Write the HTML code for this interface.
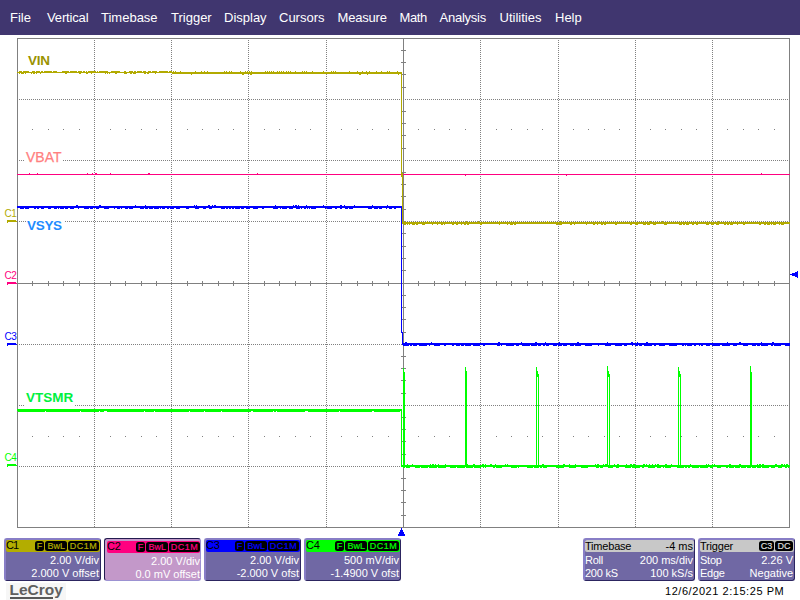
<!DOCTYPE html>
<html><head><meta charset="utf-8"><title>LeCroy</title>
<style>
html,body{margin:0;padding:0;}
body{width:800px;height:600px;background:#fff;position:relative;overflow:hidden;font-family:"Liberation Sans",sans-serif;}
#menu{position:absolute;left:0;top:0;width:800px;height:35px;background:#40366f;}
#menu span{position:absolute;top:10px;color:#fff;font-size:13px;line-height:16px;white-space:nowrap;}
svg{position:absolute;left:0;top:0;}
.lab{position:absolute;font-size:13px;line-height:13px;font-weight:bold;background:#fff;white-space:nowrap;padding:0 2px;}
.cm{position:absolute;font-size:10px;line-height:9px;left:4.5px;white-space:nowrap;letter-spacing:-0.5px}
.box{position:absolute;top:538px;width:97px;height:43px;box-sizing:border-box;background:#7068a4;border-style:solid;border-width:2px 1px 1px 2px;border-color:#887ec6 #2c2560 #2c2560 #887ec6;border-radius:3px;color:#fff;font-size:11px;}
.box.sel{background:#c398c9;border-width:1px;border-color:#241c50 #9c92d2 #9c92d2 #241c50;}
.box .in{position:absolute;left:0;top:0;right:0;bottom:0}
.box.sel .in{left:2px;top:2px;right:-1px;bottom:-1px}
.box .hd{position:absolute;left:0;top:0;right:0;height:12px;border-radius:2px;color:#000;}
.box.sel .hd{top:2px;left:2px;right:0}
.box .nm{position:absolute;left:1px;top:0;font-size:11px;line-height:12px;}
.box .cn{left:0;top:-1px;font-size:11px;letter-spacing:-1px}
.bd{position:absolute;top:1px;height:10px;background:#000;border-radius:2.5px;font-size:9px;line-height:10px;text-align:center;-webkit-text-stroke:0.2px}
.box .r1,.box .r2{position:absolute;right:1px;white-space:nowrap;line-height:12px;}
.box .r1{top:14px} .box .r2{top:27px}
.box.sel .r1{top:16px;right:0} .box.sel .r2{top:29px;right:0}
.box .l1,.box .l2{position:absolute;left:0;white-space:nowrap;line-height:12px;letter-spacing:-0.25px}
.box .l1{top:14px} .box .l2{top:27px}
.hdg{background:#c8c8c8}
#logo{position:absolute;left:6px;top:583px;width:60px;height:17px;background:#f6f6f6;}
#logo span{position:absolute;left:3.5px;top:-1px;font-size:15.5px;line-height:16px;font-weight:bold;color:#606060;}
#logo i{position:absolute;left:4px;top:14px;width:43px;height:2px;background:#585858}
#date{position:absolute;left:665px;top:585px;font-size:11px;line-height:12px;color:#000;white-space:nowrap;letter-spacing:0.55px}
</style></head><body>
<div id="menu">
<span style="left:10px">File</span><span style="left:47px;letter-spacing:-0.15px">Vertical</span><span style="left:101px">Timebase</span><span style="left:171px">Trigger</span><span style="left:224px">Display</span><span style="left:279px">Cursors</span><span style="left:337.5px;letter-spacing:-0.2px">Measure</span><span style="left:399.5px;letter-spacing:-0.4px">Math</span><span style="left:439.5px;letter-spacing:-0.25px">Analysis</span><span style="left:499.5px">Utilities</span><span style="left:555px">Help</span>
</div>
<svg width="800" height="600" viewBox="0 0 800 600" shape-rendering="crispEdges">
<rect x="17.5" y="38.5" width="772" height="489" fill="none" stroke="#808080" stroke-width="1"/>
<line x1="94.5" y1="40" x2="94.5" y2="527" stroke="#808080" stroke-width="1" stroke-dasharray="1 1"/>
<line x1="171.5" y1="40" x2="171.5" y2="527" stroke="#808080" stroke-width="1" stroke-dasharray="1 1"/>
<line x1="248.5" y1="40" x2="248.5" y2="527" stroke="#808080" stroke-width="1" stroke-dasharray="1 1"/>
<line x1="326.5" y1="40" x2="326.5" y2="527" stroke="#808080" stroke-width="1" stroke-dasharray="1 1"/>
<line x1="403.5" y1="38" x2="403.5" y2="527" stroke="#808080" stroke-width="1"/>
<line x1="480.5" y1="40" x2="480.5" y2="527" stroke="#808080" stroke-width="1" stroke-dasharray="1 1"/>
<line x1="558.5" y1="40" x2="558.5" y2="527" stroke="#808080" stroke-width="1" stroke-dasharray="1 1"/>
<line x1="635.5" y1="40" x2="635.5" y2="527" stroke="#808080" stroke-width="1" stroke-dasharray="1 1"/>
<line x1="712.5" y1="40" x2="712.5" y2="527" stroke="#808080" stroke-width="1" stroke-dasharray="1 1"/>
<line x1="19" y1="99.5" x2="789" y2="99.5" stroke="#808080" stroke-width="1" stroke-dasharray="1 1"/>
<line x1="19" y1="160.5" x2="789" y2="160.5" stroke="#808080" stroke-width="1" stroke-dasharray="1 1"/>
<line x1="19" y1="221.5" x2="789" y2="221.5" stroke="#808080" stroke-width="1" stroke-dasharray="1 1"/>
<line x1="17" y1="283.5" x2="789" y2="283.5" stroke="#808080" stroke-width="1"/>
<line x1="19" y1="344.5" x2="789" y2="344.5" stroke="#808080" stroke-width="1" stroke-dasharray="1 1"/>
<line x1="19" y1="405.5" x2="789" y2="405.5" stroke="#808080" stroke-width="1" stroke-dasharray="1 1"/>
<line x1="19" y1="466.5" x2="789" y2="466.5" stroke="#808080" stroke-width="1" stroke-dasharray="1 1"/>
<rect x="32" y="281" width="1" height="5" fill="#808080"/>
<rect x="48" y="281" width="1" height="5" fill="#808080"/>
<rect x="63" y="281" width="1" height="5" fill="#808080"/>
<rect x="79" y="281" width="1" height="5" fill="#808080"/>
<rect x="110" y="281" width="1" height="5" fill="#808080"/>
<rect x="125" y="281" width="1" height="5" fill="#808080"/>
<rect x="141" y="281" width="1" height="5" fill="#808080"/>
<rect x="156" y="281" width="1" height="5" fill="#808080"/>
<rect x="187" y="281" width="1" height="5" fill="#808080"/>
<rect x="202" y="281" width="1" height="5" fill="#808080"/>
<rect x="218" y="281" width="1" height="5" fill="#808080"/>
<rect x="233" y="281" width="1" height="5" fill="#808080"/>
<rect x="264" y="281" width="1" height="5" fill="#808080"/>
<rect x="279" y="281" width="1" height="5" fill="#808080"/>
<rect x="295" y="281" width="1" height="5" fill="#808080"/>
<rect x="310" y="281" width="1" height="5" fill="#808080"/>
<rect x="341" y="281" width="1" height="5" fill="#808080"/>
<rect x="357" y="281" width="1" height="5" fill="#808080"/>
<rect x="372" y="281" width="1" height="5" fill="#808080"/>
<rect x="388" y="281" width="1" height="5" fill="#808080"/>
<rect x="418" y="281" width="1" height="5" fill="#808080"/>
<rect x="434" y="281" width="1" height="5" fill="#808080"/>
<rect x="449" y="281" width="1" height="5" fill="#808080"/>
<rect x="465" y="281" width="1" height="5" fill="#808080"/>
<rect x="496" y="281" width="1" height="5" fill="#808080"/>
<rect x="511" y="281" width="1" height="5" fill="#808080"/>
<rect x="527" y="281" width="1" height="5" fill="#808080"/>
<rect x="542" y="281" width="1" height="5" fill="#808080"/>
<rect x="573" y="281" width="1" height="5" fill="#808080"/>
<rect x="588" y="281" width="1" height="5" fill="#808080"/>
<rect x="604" y="281" width="1" height="5" fill="#808080"/>
<rect x="619" y="281" width="1" height="5" fill="#808080"/>
<rect x="650" y="281" width="1" height="5" fill="#808080"/>
<rect x="665" y="281" width="1" height="5" fill="#808080"/>
<rect x="681" y="281" width="1" height="5" fill="#808080"/>
<rect x="696" y="281" width="1" height="5" fill="#808080"/>
<rect x="727" y="281" width="1" height="5" fill="#808080"/>
<rect x="743" y="281" width="1" height="5" fill="#808080"/>
<rect x="758" y="281" width="1" height="5" fill="#808080"/>
<rect x="774" y="281" width="1" height="5" fill="#808080"/>
<rect x="401" y="50" width="5" height="1" fill="#808080"/>
<rect x="401" y="62" width="5" height="1" fill="#808080"/>
<rect x="401" y="74" width="5" height="1" fill="#808080"/>
<rect x="401" y="87" width="5" height="1" fill="#808080"/>
<rect x="401" y="111" width="5" height="1" fill="#808080"/>
<rect x="401" y="123" width="5" height="1" fill="#808080"/>
<rect x="401" y="135" width="5" height="1" fill="#808080"/>
<rect x="401" y="148" width="5" height="1" fill="#808080"/>
<rect x="401" y="172" width="5" height="1" fill="#808080"/>
<rect x="401" y="184" width="5" height="1" fill="#808080"/>
<rect x="401" y="196" width="5" height="1" fill="#808080"/>
<rect x="401" y="209" width="5" height="1" fill="#808080"/>
<rect x="401" y="233" width="5" height="1" fill="#808080"/>
<rect x="401" y="246" width="5" height="1" fill="#808080"/>
<rect x="401" y="258" width="5" height="1" fill="#808080"/>
<rect x="401" y="270" width="5" height="1" fill="#808080"/>
<rect x="401" y="295" width="5" height="1" fill="#808080"/>
<rect x="401" y="307" width="5" height="1" fill="#808080"/>
<rect x="401" y="319" width="5" height="1" fill="#808080"/>
<rect x="401" y="332" width="5" height="1" fill="#808080"/>
<rect x="401" y="356" width="5" height="1" fill="#808080"/>
<rect x="401" y="368" width="5" height="1" fill="#808080"/>
<rect x="401" y="380" width="5" height="1" fill="#808080"/>
<rect x="401" y="393" width="5" height="1" fill="#808080"/>
<rect x="401" y="417" width="5" height="1" fill="#808080"/>
<rect x="401" y="429" width="5" height="1" fill="#808080"/>
<rect x="401" y="441" width="5" height="1" fill="#808080"/>
<rect x="401" y="454" width="5" height="1" fill="#808080"/>
<rect x="401" y="478" width="5" height="1" fill="#808080"/>
<rect x="401" y="490" width="5" height="1" fill="#808080"/>
<rect x="401" y="502" width="5" height="1" fill="#808080"/>
<rect x="401" y="515" width="5" height="1" fill="#808080"/>
<rect x="32" y="129" width="1" height="1" fill="#808080"/>
<rect x="48" y="129" width="1" height="1" fill="#808080"/>
<rect x="63" y="129" width="1" height="1" fill="#808080"/>
<rect x="79" y="129" width="1" height="1" fill="#808080"/>
<rect x="110" y="129" width="1" height="1" fill="#808080"/>
<rect x="125" y="129" width="1" height="1" fill="#808080"/>
<rect x="141" y="129" width="1" height="1" fill="#808080"/>
<rect x="156" y="129" width="1" height="1" fill="#808080"/>
<rect x="187" y="129" width="1" height="1" fill="#808080"/>
<rect x="202" y="129" width="1" height="1" fill="#808080"/>
<rect x="218" y="129" width="1" height="1" fill="#808080"/>
<rect x="233" y="129" width="1" height="1" fill="#808080"/>
<rect x="264" y="129" width="1" height="1" fill="#808080"/>
<rect x="279" y="129" width="1" height="1" fill="#808080"/>
<rect x="295" y="129" width="1" height="1" fill="#808080"/>
<rect x="310" y="129" width="1" height="1" fill="#808080"/>
<rect x="341" y="129" width="1" height="1" fill="#808080"/>
<rect x="357" y="129" width="1" height="1" fill="#808080"/>
<rect x="372" y="129" width="1" height="1" fill="#808080"/>
<rect x="388" y="129" width="1" height="1" fill="#808080"/>
<rect x="418" y="129" width="1" height="1" fill="#808080"/>
<rect x="434" y="129" width="1" height="1" fill="#808080"/>
<rect x="449" y="129" width="1" height="1" fill="#808080"/>
<rect x="465" y="129" width="1" height="1" fill="#808080"/>
<rect x="496" y="129" width="1" height="1" fill="#808080"/>
<rect x="511" y="129" width="1" height="1" fill="#808080"/>
<rect x="527" y="129" width="1" height="1" fill="#808080"/>
<rect x="542" y="129" width="1" height="1" fill="#808080"/>
<rect x="573" y="129" width="1" height="1" fill="#808080"/>
<rect x="588" y="129" width="1" height="1" fill="#808080"/>
<rect x="604" y="129" width="1" height="1" fill="#808080"/>
<rect x="619" y="129" width="1" height="1" fill="#808080"/>
<rect x="650" y="129" width="1" height="1" fill="#808080"/>
<rect x="665" y="129" width="1" height="1" fill="#808080"/>
<rect x="681" y="129" width="1" height="1" fill="#808080"/>
<rect x="696" y="129" width="1" height="1" fill="#808080"/>
<rect x="727" y="129" width="1" height="1" fill="#808080"/>
<rect x="743" y="129" width="1" height="1" fill="#808080"/>
<rect x="758" y="129" width="1" height="1" fill="#808080"/>
<rect x="774" y="129" width="1" height="1" fill="#808080"/>
<rect x="32" y="436" width="1" height="1" fill="#808080"/>
<rect x="48" y="436" width="1" height="1" fill="#808080"/>
<rect x="63" y="436" width="1" height="1" fill="#808080"/>
<rect x="79" y="436" width="1" height="1" fill="#808080"/>
<rect x="110" y="436" width="1" height="1" fill="#808080"/>
<rect x="125" y="436" width="1" height="1" fill="#808080"/>
<rect x="141" y="436" width="1" height="1" fill="#808080"/>
<rect x="156" y="436" width="1" height="1" fill="#808080"/>
<rect x="187" y="436" width="1" height="1" fill="#808080"/>
<rect x="202" y="436" width="1" height="1" fill="#808080"/>
<rect x="218" y="436" width="1" height="1" fill="#808080"/>
<rect x="233" y="436" width="1" height="1" fill="#808080"/>
<rect x="264" y="436" width="1" height="1" fill="#808080"/>
<rect x="279" y="436" width="1" height="1" fill="#808080"/>
<rect x="295" y="436" width="1" height="1" fill="#808080"/>
<rect x="310" y="436" width="1" height="1" fill="#808080"/>
<rect x="341" y="436" width="1" height="1" fill="#808080"/>
<rect x="357" y="436" width="1" height="1" fill="#808080"/>
<rect x="372" y="436" width="1" height="1" fill="#808080"/>
<rect x="388" y="436" width="1" height="1" fill="#808080"/>
<rect x="418" y="436" width="1" height="1" fill="#808080"/>
<rect x="434" y="436" width="1" height="1" fill="#808080"/>
<rect x="449" y="436" width="1" height="1" fill="#808080"/>
<rect x="465" y="436" width="1" height="1" fill="#808080"/>
<rect x="496" y="436" width="1" height="1" fill="#808080"/>
<rect x="511" y="436" width="1" height="1" fill="#808080"/>
<rect x="527" y="436" width="1" height="1" fill="#808080"/>
<rect x="542" y="436" width="1" height="1" fill="#808080"/>
<rect x="573" y="436" width="1" height="1" fill="#808080"/>
<rect x="588" y="436" width="1" height="1" fill="#808080"/>
<rect x="604" y="436" width="1" height="1" fill="#808080"/>
<rect x="619" y="436" width="1" height="1" fill="#808080"/>
<rect x="650" y="436" width="1" height="1" fill="#808080"/>
<rect x="665" y="436" width="1" height="1" fill="#808080"/>
<rect x="681" y="436" width="1" height="1" fill="#808080"/>
<rect x="696" y="436" width="1" height="1" fill="#808080"/>
<rect x="727" y="436" width="1" height="1" fill="#808080"/>
<rect x="743" y="436" width="1" height="1" fill="#808080"/>
<rect x="758" y="436" width="1" height="1" fill="#808080"/>
<rect x="774" y="436" width="1" height="1" fill="#808080"/>
<rect x="17" y="174" width="773" height="1" fill="#ff0080"/>
<path d="M29 173h1v1h-1zM37 173h1v1h-1zM87 173h1v1h-1zM92 173h1v1h-1zM95 173h1v1h-1zM96 173h1v1h-1zM110 173h1v1h-1zM148 173h1v1h-1zM149 173h1v1h-1zM257 173h1v1h-1zM761 173h1v1h-1zM465 175h1v1h-1zM566 175h1v1h-1z" fill="#ff0080"/>
<rect x="17" y="206" width="385" height="2" fill="#0000ff"/><path d="M76 205h2v1h-2zM99 205h2v1h-2zM135 205h1v1h-1zM145 205h1v1h-1zM194 205h1v1h-1zM196 205h1v1h-1zM208 205h2v1h-2zM212 205h1v1h-1zM214 205h2v1h-2zM275 205h1v1h-1zM293 205h1v1h-1zM295 205h2v1h-2zM298 205h1v1h-1zM306 205h1v1h-1zM323 205h1v1h-1zM340 205h2v1h-2zM344 205h1v1h-1zM354 205h1v1h-1zM372 205h1v1h-1zM387 205h1v1h-1zM20 208h4v1h-4zM25 208h4v1h-4zM34 208h2v1h-2zM37 208h2v1h-2zM41 208h3v1h-3zM48 208h3v1h-3zM54 208h3v1h-3zM58 208h1v1h-1zM60 208h4v1h-4zM65 208h3v1h-3zM70 208h4v1h-4zM78 208h1v1h-1zM84 208h5v1h-5zM90 208h3v1h-3zM96 208h3v1h-3zM104 208h5v1h-5zM114 208h1v1h-1zM117 208h3v1h-3zM121 208h1v1h-1zM125 208h3v1h-3zM129 208h4v1h-4zM140 208h4v1h-4zM145 208h3v1h-3zM149 208h4v1h-4zM154 208h5v1h-5zM160 208h1v1h-1zM162 208h3v1h-3zM167 208h2v1h-2zM170 208h4v1h-4zM176 208h4v1h-4zM186 208h3v1h-3zM195 208h4v1h-4zM203 208h3v1h-3zM209 208h3v1h-3zM221 208h4v1h-4zM226 208h2v1h-2zM229 208h2v1h-2zM232 208h2v1h-2zM235 208h5v1h-5zM241 208h3v1h-3zM246 208h4v1h-4zM253 208h5v1h-5zM262 208h2v1h-2zM273 208h5v1h-5zM280 208h1v1h-1zM282 208h5v1h-5zM289 208h4v1h-4zM296 208h4v1h-4zM301 208h1v1h-1zM304 208h2v1h-2zM307 208h1v1h-1zM309 208h1v1h-1zM311 208h5v1h-5zM325 208h1v1h-1zM327 208h5v1h-5zM335 208h2v1h-2zM340 208h2v1h-2zM345 208h3v1h-3zM349 208h4v1h-4zM368 208h4v1h-4zM374 208h4v1h-4zM379 208h3v1h-3zM386 208h1v1h-1zM389 208h3v1h-3zM394 208h2v1h-2z" fill="#0000ff"/>
<rect x="401" y="206" width="1" height="127" fill="#0000ff"/>
<rect x="402" y="332" width="1" height="13" fill="#0000ff"/>
<rect x="402" y="343" width="388" height="2" fill="#0000ff"/><path d="M405 342h2v1h-2zM431 342h1v1h-1zM498 342h2v1h-2zM521 342h1v1h-1zM535 342h2v1h-2zM545 342h1v1h-1zM559 342h1v1h-1zM577 342h2v1h-2zM607 342h1v1h-1zM631 342h2v1h-2zM637 342h1v1h-1zM646 342h2v1h-2zM727 342h1v1h-1zM739 342h2v1h-2zM761 342h1v1h-1zM772 342h2v1h-2zM403 345h6v1h-6zM410 345h2v1h-2zM413 345h4v1h-4zM419 345h8v1h-8zM429 345h1v1h-1zM434 345h6v1h-6zM444 345h2v1h-2zM452 345h2v1h-2zM456 345h4v1h-4zM461 345h3v1h-3zM465 345h6v1h-6zM473 345h7v1h-7zM483 345h2v1h-2zM497 345h3v1h-3zM501 345h1v1h-1zM506 345h8v1h-8zM516 345h3v1h-3zM522 345h8v1h-8zM531 345h6v1h-6zM538 345h3v1h-3zM543 345h2v1h-2zM546 345h3v1h-3zM553 345h4v1h-4zM558 345h4v1h-4zM563 345h4v1h-4zM570 345h4v1h-4zM575 345h6v1h-6zM585 345h7v1h-7zM598 345h1v1h-1zM605 345h6v1h-6zM615 345h7v1h-7zM624 345h3v1h-3zM632 345h1v1h-1zM635 345h3v1h-3zM639 345h3v1h-3zM644 345h8v1h-8zM654 345h2v1h-2zM659 345h6v1h-6zM669 345h8v1h-8zM682 345h2v1h-2zM685 345h1v1h-1zM687 345h5v1h-5zM694 345h2v1h-2zM699 345h1v1h-1zM701 345h2v1h-2zM706 345h4v1h-4zM712 345h8v1h-8zM722 345h8v1h-8zM733 345h4v1h-4zM743 345h5v1h-5zM752 345h4v1h-4zM757 345h3v1h-3zM761 345h7v1h-7zM771 345h2v1h-2zM774 345h7v1h-7zM785 345h5v1h-5z" fill="#0000ff"/>
<rect x="17" y="72" width="155" height="1" fill="#b2aa00"/><path d="M19 71h3v1h-3zM23 71h6v1h-6zM32 71h3v1h-3zM36 71h4v1h-4zM41 71h2v1h-2zM44 71h8v1h-8zM53 71h4v1h-4zM62 71h7v1h-7zM70 71h7v1h-7zM78 71h4v1h-4zM83 71h2v1h-2zM86 71h1v1h-1zM88 71h8v1h-8zM97 71h1v1h-1zM99 71h9v1h-9zM111 71h9v1h-9zM124 71h2v1h-2zM129 71h4v1h-4zM134 71h2v1h-2zM137 71h5v1h-5zM143 71h3v1h-3zM148 71h3v1h-3zM152 71h5v1h-5zM159 71h9v1h-9zM169 71h3v1h-3zM19 73h1v1h-1zM21 73h3v1h-3zM25 73h1v1h-1zM31 73h1v1h-1zM33 73h2v1h-2zM36 73h1v1h-1zM40 73h1v1h-1zM65 73h2v1h-2zM79 73h2v1h-2zM86 73h2v1h-2zM91 73h1v1h-1zM105 73h1v1h-1zM107 73h1v1h-1zM109 73h1v1h-1zM115 73h2v1h-2zM124 73h3v1h-3zM130 73h2v1h-2zM133 73h3v1h-3zM144 73h2v1h-2zM147 73h2v1h-2zM155 73h1v1h-1z" fill="#b2aa00"/>
<rect x="172" y="72" width="230" height="2" fill="#b2aa00"/><path d="M173 71h1v1h-1zM175 71h1v1h-1zM180 71h1v1h-1zM195 71h1v1h-1zM201 71h1v1h-1zM204 71h1v1h-1zM207 71h1v1h-1zM224 71h1v1h-1zM226 71h1v1h-1zM229 71h1v1h-1zM231 71h1v1h-1zM240 71h1v1h-1zM245 71h1v1h-1zM247 71h1v1h-1zM249 71h1v1h-1zM251 71h1v1h-1zM265 71h1v1h-1zM267 71h1v1h-1zM269 71h1v1h-1zM271 71h1v1h-1zM273 71h1v1h-1zM277 71h1v1h-1zM279 71h1v1h-1zM281 71h1v1h-1zM283 71h1v1h-1zM286 71h1v1h-1zM288 71h1v1h-1zM290 71h1v1h-1zM295 71h1v1h-1zM302 71h1v1h-1zM304 71h1v1h-1zM306 71h1v1h-1zM312 71h1v1h-1zM323 71h1v1h-1zM331 71h1v1h-1zM333 71h1v1h-1zM335 71h1v1h-1zM349 71h1v1h-1zM357 71h1v1h-1zM362 71h1v1h-1zM366 71h1v1h-1zM369 71h1v1h-1zM376 71h1v1h-1zM381 71h1v1h-1zM387 71h1v1h-1zM389 71h1v1h-1zM397 71h1v1h-1zM191 74h1v1h-1zM242 74h2v1h-2zM250 74h2v1h-2zM359 74h2v1h-2zM367 74h1v1h-1zM398 74h1v1h-1z" fill="#b2aa00"/>
<rect x="401" y="72" width="1" height="105" fill="#b2aa00"/>
<rect x="402" y="173" width="1" height="51" fill="#b2aa00"/>
<rect x="403" y="222" width="387" height="2" fill="#b2aa00"/><path d="M404 221h1v1h-1zM427 221h1v1h-1zM466 221h1v1h-1zM478 221h1v1h-1zM499 221h1v1h-1zM547 221h1v1h-1zM560 221h1v1h-1zM650 221h1v1h-1zM662 221h1v1h-1zM718 221h1v1h-1zM404 224h2v1h-2zM407 224h1v1h-1zM409 224h1v1h-1zM412 224h3v1h-3zM416 224h2v1h-2zM422 224h3v1h-3zM432 224h1v1h-1zM437 224h1v1h-1zM441 224h2v1h-2zM444 224h1v1h-1zM452 224h2v1h-2zM456 224h2v1h-2zM461 224h1v1h-1zM464 224h2v1h-2zM467 224h2v1h-2zM480 224h2v1h-2zM499 224h1v1h-1zM507 224h1v1h-1zM510 224h3v1h-3zM514 224h2v1h-2zM556 224h2v1h-2zM559 224h3v1h-3zM570 224h2v1h-2zM574 224h1v1h-1zM586 224h1v1h-1zM593 224h2v1h-2zM597 224h1v1h-1zM601 224h2v1h-2zM604 224h2v1h-2zM615 224h2v1h-2zM630 224h2v1h-2zM635 224h3v1h-3zM643 224h3v1h-3zM647 224h3v1h-3zM653 224h3v1h-3zM664 224h3v1h-3zM679 224h3v1h-3zM683 224h2v1h-2zM686 224h3v1h-3zM692 224h2v1h-2zM696 224h2v1h-2zM706 224h3v1h-3zM711 224h3v1h-3zM716 224h3v1h-3zM724 224h2v1h-2zM727 224h2v1h-2zM730 224h3v1h-3zM737 224h1v1h-1zM743 224h2v1h-2zM759 224h2v1h-2zM764 224h2v1h-2zM767 224h3v1h-3zM771 224h1v1h-1zM773 224h3v1h-3zM779 224h1v1h-1zM781 224h3v1h-3z" fill="#b2aa00"/>
<rect x="17" y="409" width="385" height="2" fill="#00ff00"/><path d="M18 411h27v1h-27zM46 411h34v1h-34zM81 411h18v1h-18zM100 411h4v1h-4zM107 411h37v1h-37zM145 411h9v1h-9zM155 411h34v1h-34zM190 411h14v1h-14zM205 411h16v1h-16zM222 411h29v1h-29zM253 411h20v1h-20zM274 411h2v1h-2zM277 411h28v1h-28zM308 411h31v1h-31zM340 411h32v1h-32zM374 411h26v1h-26z" fill="#00ff00"/>
<rect x="401" y="409" width="1" height="58" fill="#00ff00"/>
<rect x="401" y="465" width="389" height="2" fill="#00ff00"/><path d="M403 464h2v1h-2zM407 464h1v1h-1zM412 464h1v1h-1zM430 464h1v1h-1zM432 464h2v1h-2zM435 464h1v1h-1zM438 464h1v1h-1zM445 464h1v1h-1zM466 464h2v1h-2zM473 464h2v1h-2zM482 464h2v1h-2zM485 464h1v1h-1zM490 464h2v1h-2zM495 464h1v1h-1zM505 464h1v1h-1zM507 464h1v1h-1zM542 464h2v1h-2zM563 464h2v1h-2zM569 464h1v1h-1zM575 464h1v1h-1zM595 464h1v1h-1zM597 464h2v1h-2zM603 464h1v1h-1zM605 464h2v1h-2zM614 464h1v1h-1zM617 464h2v1h-2zM626 464h1v1h-1zM630 464h2v1h-2zM633 464h2v1h-2zM643 464h2v1h-2zM646 464h1v1h-1zM649 464h1v1h-1zM652 464h1v1h-1zM655 464h1v1h-1zM657 464h2v1h-2zM665 464h2v1h-2zM671 464h1v1h-1zM690 464h1v1h-1zM706 464h1v1h-1zM708 464h1v1h-1zM712 464h1v1h-1zM714 464h1v1h-1zM729 464h2v1h-2zM739 464h2v1h-2zM757 464h1v1h-1zM759 464h2v1h-2zM762 464h2v1h-2zM775 464h2v1h-2zM781 464h2v1h-2zM784 464h1v1h-1zM786 464h2v1h-2zM403 467h2v1h-2zM406 467h4v1h-4zM415 467h5v1h-5zM421 467h7v1h-7zM429 467h8v1h-8zM438 467h8v1h-8zM450 467h6v1h-6zM457 467h8v1h-8zM466 467h7v1h-7zM474 467h7v1h-7zM483 467h1v1h-1zM485 467h1v1h-1zM493 467h2v1h-2zM496 467h6v1h-6zM511 467h6v1h-6zM518 467h1v1h-1zM527 467h6v1h-6zM534 467h5v1h-5zM540 467h2v1h-2zM543 467h4v1h-4zM556 467h8v1h-8zM569 467h7v1h-7zM581 467h7v1h-7zM596 467h3v1h-3zM600 467h3v1h-3zM608 467h5v1h-5zM616 467h3v1h-3zM625 467h6v1h-6zM632 467h8v1h-8zM642 467h2v1h-2zM648 467h7v1h-7zM657 467h4v1h-4zM663 467h1v1h-1zM665 467h6v1h-6zM677 467h7v1h-7zM685 467h2v1h-2zM688 467h2v1h-2zM692 467h7v1h-7zM700 467h8v1h-8zM710 467h3v1h-3zM717 467h4v1h-4zM726 467h2v1h-2zM729 467h5v1h-5zM735 467h5v1h-5zM741 467h5v1h-5zM747 467h4v1h-4zM752 467h4v1h-4zM757 467h4v1h-4zM762 467h7v1h-7zM771 467h4v1h-4zM778 467h4v1h-4zM785 467h2v1h-2zM788 467h1v1h-1z" fill="#00ff00"/>
<rect x="403" y="368" width="1" height="98" fill="#00ff00"/>
<rect x="404" y="372" width="1" height="94" fill="#00ff00"/>
<rect x="465" y="367" width="1" height="99" fill="#00ff00"/>
<rect x="466" y="371" width="1" height="95" fill="#00ff00"/>
<rect x="536" y="367" width="1" height="99" fill="#00ff00"/>
<rect x="537" y="371" width="1" height="6" fill="#00ff00"/>
<rect x="538" y="374" width="1" height="92" fill="#00ff00"/>
<rect x="607" y="366" width="1" height="100" fill="#00ff00"/>
<rect x="608" y="371" width="1" height="6" fill="#00ff00"/>
<rect x="609" y="374" width="1" height="92" fill="#00ff00"/>
<rect x="678" y="367" width="1" height="99" fill="#00ff00"/>
<rect x="679" y="371" width="1" height="6" fill="#00ff00"/>
<rect x="680" y="374" width="1" height="92" fill="#00ff00"/>
<rect x="750" y="366" width="1" height="100" fill="#00ff00"/>
<rect x="751" y="372" width="1" height="94" fill="#00ff00"/>
<path d="M790 274.5 L798 271 L798 278 Z" fill="#0000ff"/>
<path d="M401 528h1v2h1v2h1v2h1v2h-7v-2h1v-2h1v-2h1z" fill="#0000ff"/>
<path d="M7 220h9v1h1v1h-9v1h-1z" fill="#b2aa00"/>
<path d="M7 282h9v1h1v1h-9v1h-1z" fill="#ff0080"/>
<path d="M7 343h9v1h1v1h-9v1h-1z" fill="#0000ff"/>
<path d="M7 464h9v1h1v1h-9v1h-1z" fill="#00ff00"/>
</svg>
<div class="lab" style="left:26px;top:54px;color:#9a9200;background:none;font-size:13.5px;line-height:14px;letter-spacing:-0.3px">VIN</div>
<div class="lab" style="left:25px;top:150px;color:#ff8080;font-weight:normal;font-size:14px;line-height:14px;padding:0 1px 0 1px;-webkit-text-stroke:0.25px #ff8080">VBAT</div>
<div class="lab" style="left:26px;top:219px;color:#1e8cff;font-size:13.5px;line-height:14px;letter-spacing:-0.3px;padding:0 3px 0 1px">VSYS</div>
<div class="lab" style="left:25px;top:392px;height:15px;color:#00f040;padding:0 1px 0 1px;width:47px;font-size:13.5px;line-height:14px"><span style="position:relative;top:-1px">VTSMR</span></div>
<div class="cm" style="top:209px;color:#b2aa00">C1</div>
<div class="cm" style="top:271px;color:#ff0080">C2</div>
<div class="cm" style="top:332px;color:#0000ff">C3</div>
<div class="cm" style="top:453px;color:#00ff00">C4</div>
<div class="box" style="left:4px"><div class="hd" style="background:#b3ad00"><span class="nm cn" style="letter-spacing:-1px">C1</span><span class="bd" style="left:29px;width:9.2px;color:#b3ad00">F</span><span class="bd" style="left:39.2px;width:22.2px;color:#b3ad00">BwL</span><span class="bd" style="left:62.3px;width:30.5px;color:#b3ad00;letter-spacing:0.5px">DC1M</span></div><div class="r1">2.00 V/div</div><div class="r2">2.000 V offset</div></div>
<div class="box sel" style="left:104px"><div class="hd" style="background:#ff0080"><span class="nm cn" style="letter-spacing:-0.2px">C2</span><span class="bd" style="left:29px;width:9.2px;color:#ff0080">F</span><span class="bd" style="left:39.2px;width:22.2px;color:#ff0080">BwL</span><span class="bd" style="left:62.3px;width:30.5px;color:#ff0080;letter-spacing:0.5px">DC1M</span></div><div class="r1">2.00 V/div</div><div class="r2">0.0 mV offset</div></div>
<div class="box" style="left:204px"><div class="hd" style="background:#0000ff"><span class="nm cn" style="letter-spacing:-0.2px">C3</span><span class="bd" style="left:29px;width:9.2px;color:#0000ff">F</span><span class="bd" style="left:39.2px;width:22.2px;color:#0000ff">BwL</span><span class="bd" style="left:62.3px;width:30.5px;color:#0000ff;letter-spacing:0.5px">DC1M</span></div><div class="r1">2.00 V/div</div><div class="r2">-2.000 V ofst</div></div>
<div class="box" style="left:304px"><div class="hd" style="background:#00ff00"><span class="nm cn" style="letter-spacing:-0.2px">C4</span><span class="bd" style="left:29px;width:9.2px;color:#00ff00">F</span><span class="bd" style="left:39.2px;width:22.2px;color:#00ff00">BwL</span><span class="bd" style="left:62.3px;width:30.5px;color:#00ff00;letter-spacing:0.5px">DC1M</span></div><div class="r1">500 mV/div</div><div class="r2">-1.4900 V ofst</div></div>
<div class="box" style="left:583px;width:112px"><div class="hd hdg"><span class="nm" style="left:0;letter-spacing:-0.2px">Timebase</span><span class="nm" style="left:auto;right:1px">-4 ms</span></div><div class="l1">Roll</div><div class="r1">200 ms/div</div><div class="l2">200 kS</div><div class="r2">100 kS/s</div></div>
<div class="box" style="left:698px;width:97px"><div class="hd hdg"><span class="nm" style="left:0;letter-spacing:-0.2px">Trigger</span><span class="bd" style="left:59px;width:15px;color:#ddd">C3</span><span class="bd" style="left:75px;width:18px;color:#ddd">DC</span></div><div class="l1">Stop</div><div class="r1">2.26 V</div><div class="l2">Edge</div><div class="r2">Negative</div></div>
<div id="logo"><span>LeCroy</span><i></i></div>
<div id="date">12/6/2021 2:15:25 PM</div>
</body></html>
